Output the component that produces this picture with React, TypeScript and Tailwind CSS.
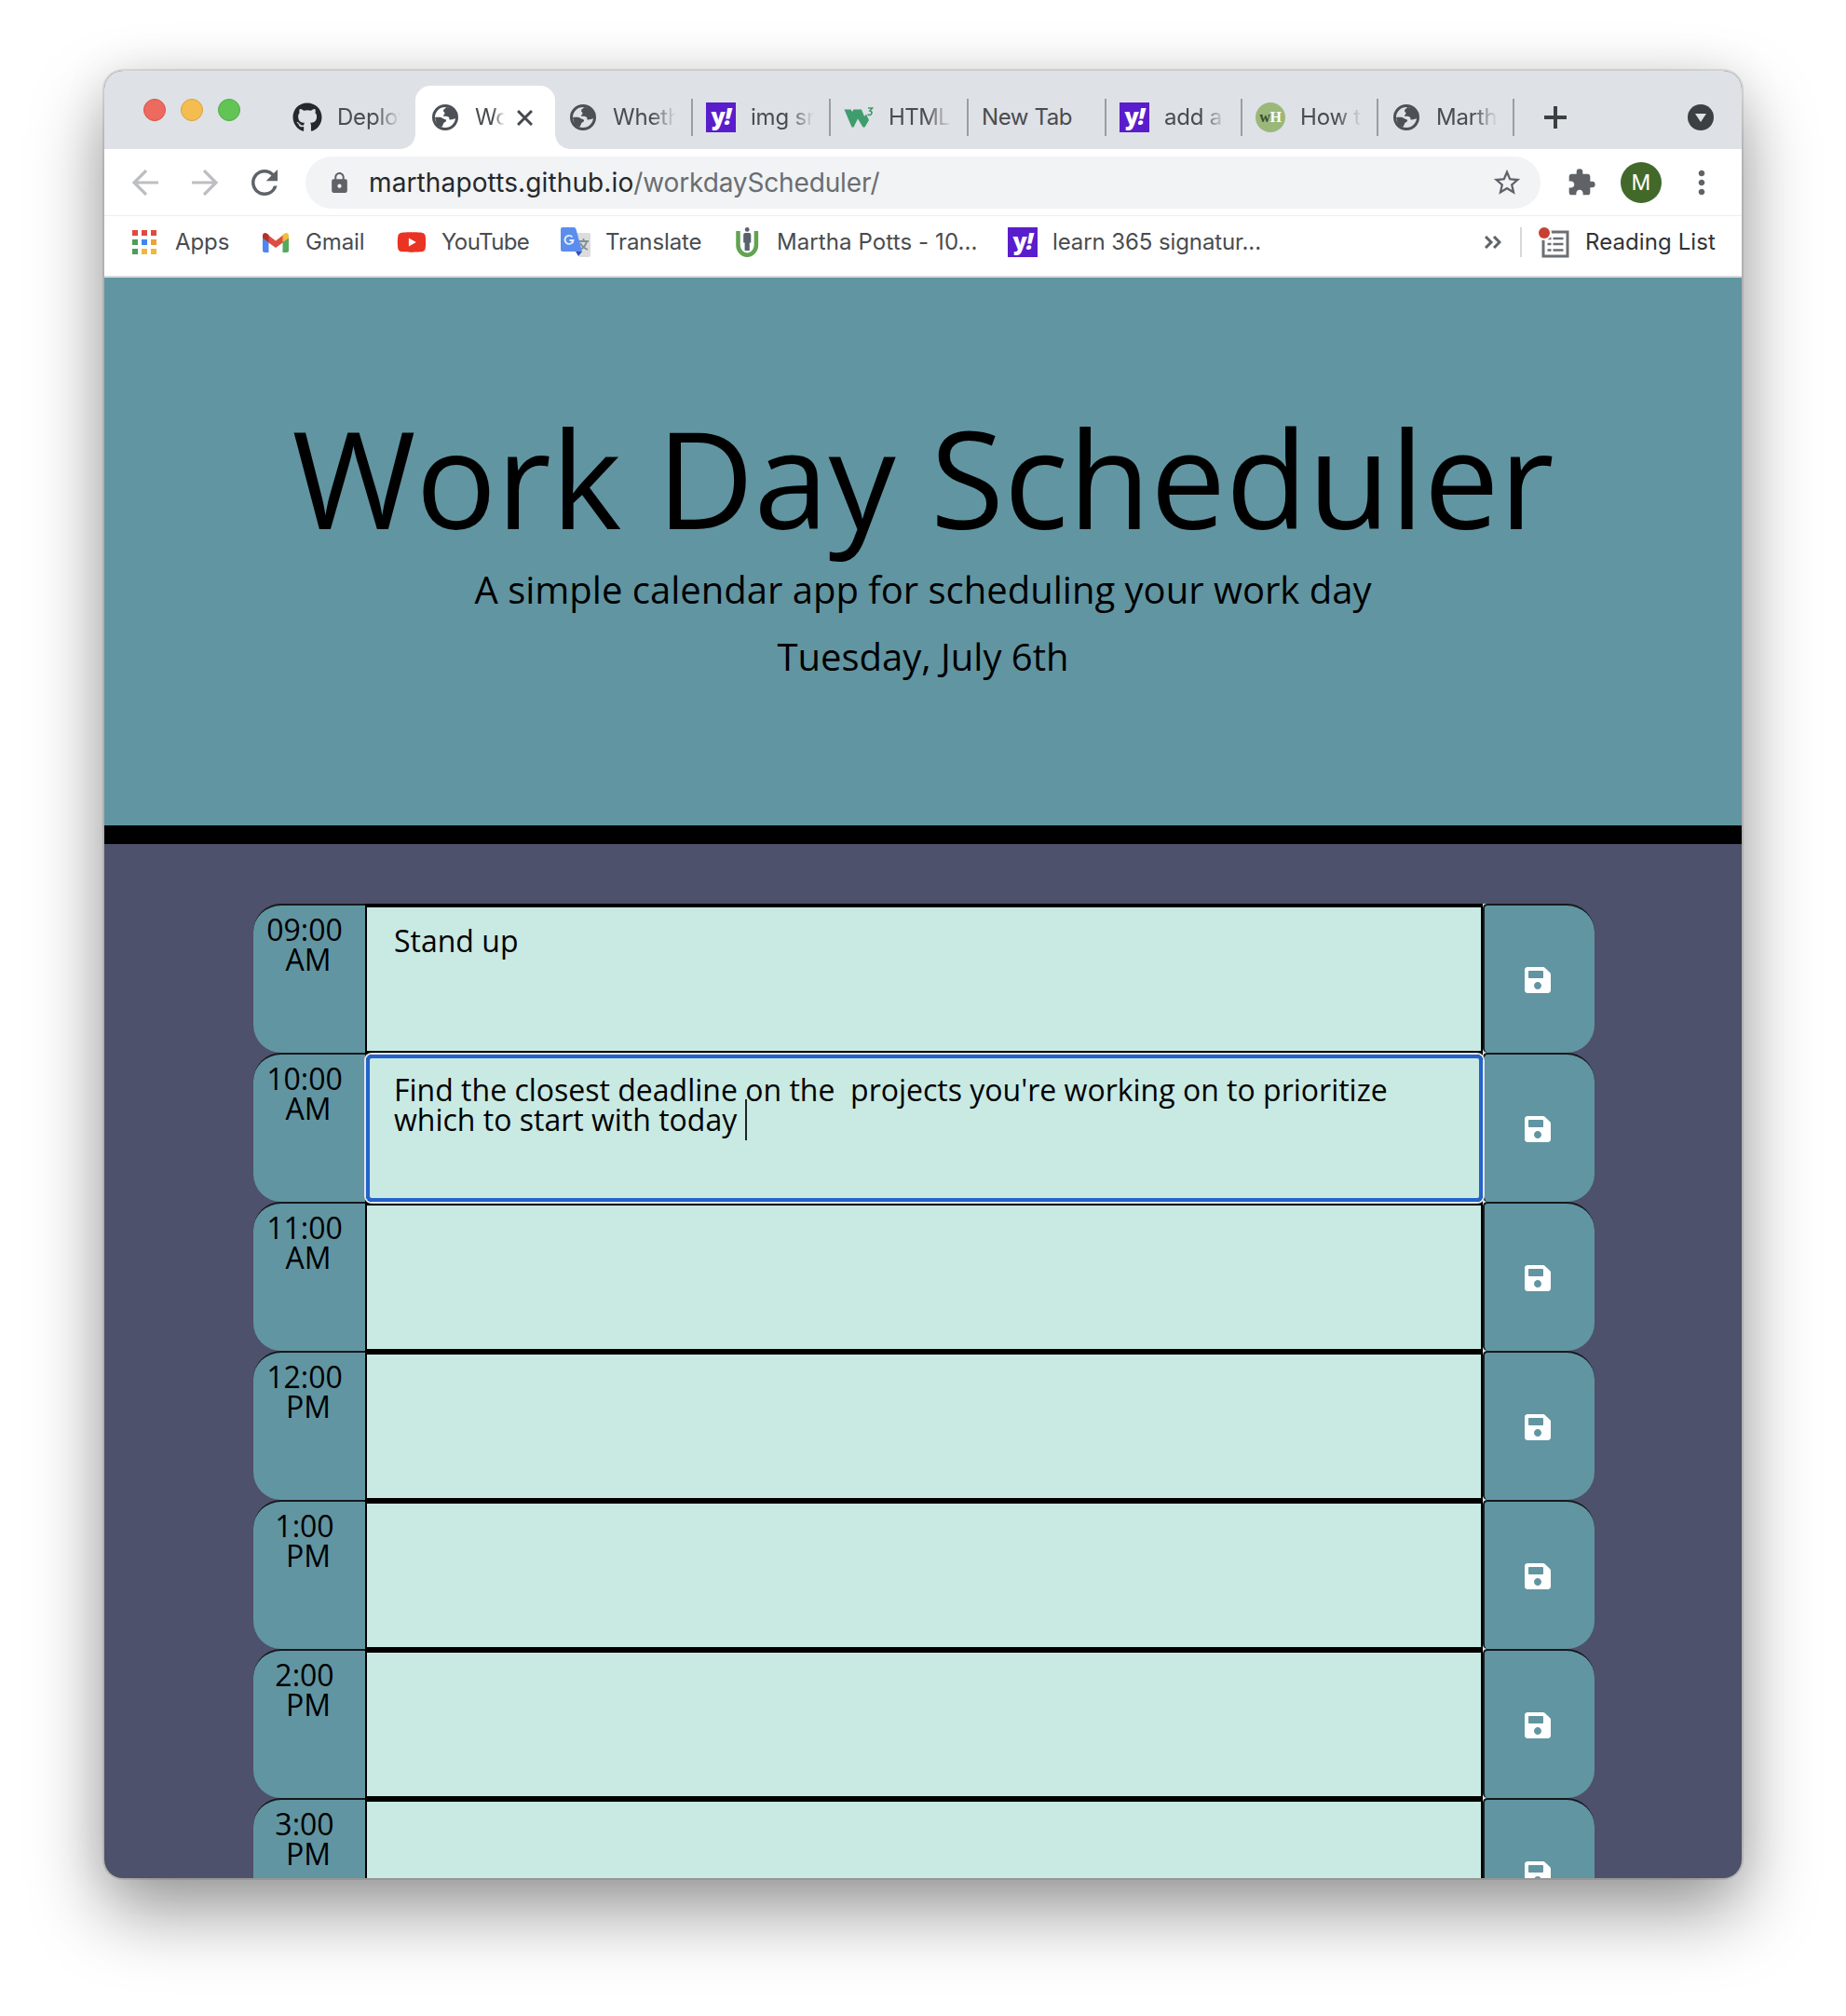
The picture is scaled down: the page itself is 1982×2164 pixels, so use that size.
import React from 'react';
import { FaGithub, FaSave, FaYoutube } from 'react-icons/fa';
import { MdLock, MdRefresh, MdStarBorder, MdExtension, MdMoreVert } from 'react-icons/md';

const Globe = () => (
  <svg viewBox="0 0 28 28" className="size-7 shrink-0">
    <circle cx="14" cy="14" r="12.5" fill="none" stroke="#4d5156" strokeWidth="3" />
    <path fill="#4d5156" d="M15 3c-1 2-3 2-3 4 0 1.500 1.500 1 1.500 2.500S12 11 12 12.500c1 .8 5 0 6 1.500s-.5 2.500 1.500 2.500c2.500 0 3.500-1 6-1.500V8l-4-4ZM3 14c3-.5 7-.5 8.500 1s3 .5 3.500 2-1.500 2-2.500 3-.5 2.500-2.500 4.500L5 22Z" />
  </svg>
);

const Yahoo = () => (
  <span className="flex size-8 shrink-0 items-center justify-center bg-[#5a1dcb] pb-1 font-['Open_Sans',sans-serif] text-[25px] leading-none font-extrabold tracking-[-1px] text-white">
    y<i>!</i>
  </span>
);

const W3 = () => (
  <svg viewBox="0 0 32 32" className="size-8 shrink-0">
    <path fill="#3f9c6d" d="M.5 7.500h7l1.500 2.500 1.500-2.500h8.500l3 7.500 2-2.500 3 6.500-4.500 7.500h-2L15 17.500 10.500 26.500H8.500Z" />
    <path d="M26 6h4.500l-2.500 3q3.500 1 1 4-1.500 1-3.500 0" fill="none" stroke="#3f9c6d" strokeWidth="1.700" />
  </svg>
);

const WikiHow = () => (
  <span className="flex size-8 shrink-0 items-center justify-center rounded-full bg-[#9ab87a] font-['Liberation_Serif',serif] text-[16px] leading-none font-bold text-white">
    <span className="text-[#3d4a34]">w</span>H
  </span>
);

const Gmail = () => (
  <svg viewBox="0 0 28 21" className="h-[21px] w-7 shrink-0">
    <path fill="#4d87ee" d="M0 5v14q0 2 2 2h4.500V9Z" />
    <path fill="#55a95c" d="M28 5v14q0 2-2 2h-4.500V9Z" />
    <path fill="#dc4e41" d="M5 1.500 14 8.500 23 1.500V9.500L14 16 5 9.500Z" />
    <path fill="#b5302a" d="M0 3C0 0 3-.8 5 1l1.500 1v8L0 5.500Z" />
    <path fill="#f4bd3b" d="M28 3c0-3-3-3.800-5-2l-1.500 1v8L28 5.500Z" />
  </svg>
);

const Translate = () => (
  <svg viewBox="0 0 32 32" className="size-8 shrink-0">
    <path fill="#dcdcdc" d="M14 6h16q2 0 2 2v22q0 2-2 2H20Z" />
    <path d="M19 15h11M24.500 12v3M28 15q-1.500 6-7 9M21 17q3 5 8 7" fill="none" stroke="#7c9096" strokeWidth="1.800" />
    <path fill="#3a4fb5" d="M16 26h7l-4 5Z" />
    <path fill="#5b8def" d="M2 0h12q2 0 2.500 2L23 26H2q-2 0-2-2V2q0-2 2-2Z" />
    <path d="M12.500 10.500A4.500 4.500 0 1 0 13.500 14H9.500" fill="none" stroke="#e6eeff" strokeWidth="1.900" />
  </svg>
);

const PersonU = () => (
  <svg viewBox="0 0 26 32" className="h-8 w-[26px] shrink-0">
    <path d="M3.500 4v15a9.700 10.700 0 0 0 19.400 0V4" fill="none" stroke="#62a350" strokeWidth="4.500" />
    <circle cx="13.200" cy="2.400" r="2.400" fill="#59616b" />
    <path fill="#59616b" d="M11 6h4.500q1.800 0 1.800 2v8.500h-1.500V25h-5.200v-8.500H9.200V8q0-2 1.800-2Z" />
  </svg>
);

const ReadingList = () => (
  <svg viewBox="0 0 34 34" className="size-[34px] shrink-0">
    <rect x="6" y="6" width="26" height="26" fill="none" stroke="#6b7075" strokeWidth="3" />
    <path d="M10.500 13h4M16.500 13h11M10.500 19h4M16.500 19h11M10.500 25.500h4M16.500 25.500h11" stroke="#6b7075" strokeWidth="2.600" />
    <circle cx="7" cy="7" r="8" fill="#fff" />
    <circle cx="7" cy="7" r="6" fill="#c84031" />
  </svg>
);

const Arrow = ({ flip = false }: { flip?: boolean }) => (
  <svg viewBox="0 0 28 28" className={flip ? 'size-7 rotate-180' : 'size-7'}>
    <path d="M28 14H2M15 1 2 14l13 13" fill="none" stroke="#bcbec1" strokeWidth="3.200" />
  </svg>
);

type TabProps = { icon?: React.ReactNode; label: string; width: string; text: string };

const Tab = ({ icon, label, width, text }: TabProps) => (
  <div className={`flex h-10 shrink-0 items-center border-r-2 border-[#9a9da1] ${width}`}>
    {icon}
    <span className={`overflow-hidden whitespace-nowrap ${text}`}>{label}</span>
  </div>
);

const fade = '[mask-image:linear-gradient(to_right,black_60%,transparent)]';

const hours = [
  ['09:00', 'AM', 'Stand up'],
  ['10:00', 'AM', "Find the closest deadline on the  projects you're working on to prioritize\nwhich to start with today "],
  ['11:00', 'AM', ''],
  ['12:00', 'PM', ''],
  ['1:00', 'PM', ''],
  ['2:00', 'PM', ''],
  ['3:00', 'PM', ''],
];

const Row = ({ time, half, note, focused }: { time: string; half: string; note: string; focused: boolean }) => (
  <div className="flex h-40 shrink-0">
    <div className="w-[120px] rounded-l-[30px] border-t-2 border-[#15191c] bg-[#6195a2] pt-[10px] text-center leading-8">
      <div className="pr-[10px]">{time}</div>
      <div className="pr-[2px]">{half}</div>
    </div>
    <div className="relative w-[1200px] border-t-4 border-r-2 border-b-2 border-l-2 border-black bg-[#c9e9e3] pt-[20px] pl-[29px] leading-8 whitespace-pre">
      {note}
      {focused && (
        <>
          <span className="inline-block h-0 w-0 align-baseline">
            <span className="absolute -mt-[34px] h-[44px] w-[2px] bg-[#1c2423]" />
          </span>
          <span className="absolute -top-[2px] -right-[2px] -bottom-[2px] -left-[1px] z-10 rounded-[6px] border-4 border-[#2363cb] shadow-[0_0_0_2px_#dfe6ee]" />
        </>
      )}
    </div>
    <div className="w-[120px] bg-linear-to-r from-[#c9e9e3] from-[6px] to-transparent to-[6px]">
      <div className="flex h-full items-center justify-center rounded-l-[5px] rounded-r-[30px] border-t-2 border-l-2 border-[#15191c] bg-[#6195a2]">
        <FaSave className="mt-[2px] mr-[4px] size-8 text-white" />
      </div>
    </div>
  </div>
);

export default function App() {
  return (
    <div className="h-[2164px] w-[1982px] overflow-hidden bg-white px-[112px] pt-[76px]">
      <div className="flex h-[1940px] w-[1758px] flex-col overflow-hidden rounded-[20px] bg-[#4e516b] font-[Inter,sans-serif] text-[#494c50] shadow-[0_0_0_2px_rgba(0,0,0,0.1),0_36px_80px_rgba(0,0,0,0.4),0_0_50px_rgba(0,0,0,0.08)]">
        <div className="flex h-[84px] shrink-0 bg-[#dee1e6] text-[24px] tracking-[-0.2px]">
          <div className="flex w-[202px] gap-4 pt-[30px] pl-[42px]">
            <span className="size-6 rounded-full border border-[#d8524a] bg-[#ec6a5e]" />
            <span className="size-6 rounded-full border border-[#dba13a] bg-[#f4bd4f]" />
            <span className="size-6 rounded-full border border-[#4fae40] bg-[#61c454]" />
          </div>
          <div className="flex w-[132px] items-center pt-[16px]">
            <FaGithub className="size-8 shrink-0 text-[#24292e]" />
            <span className={`ml-4 w-[68px] overflow-hidden ${fade}`}>Deploy</span>
          </div>
          <div className="relative mt-4 flex w-[150px] items-center rounded-t-[16px] bg-white pl-[18px]">
            <span className="absolute bottom-0 -left-4 size-4 bg-[radial-gradient(circle_at_0_0,#dee1e6_15.5px,white_16px)]" />
            <span className="absolute -right-4 bottom-0 size-4 bg-[radial-gradient(circle_at_100%_0,#dee1e6_15.5px,white_16px)]" />
            <Globe />
            <span className={`ml-[18px] w-[32px] overflow-hidden ${fade}`}>Wo</span>
            <svg viewBox="0 0 16 16" className="ml-[13px] size-[17px]"><path d="m1 1 14 14M15 1 1 15" stroke="#45494d" strokeWidth="2.800" /></svg>
          </div>
          <div className="flex items-center pt-4 pl-4">
            <Tab icon={<Globe />} label="Whether" width="w-[132px]" text={`ml-[18px] w-[68px] ${fade}`} />
            <Tab icon={<Yahoo />} label="img src" width="w-[148px] pl-[14px]" text={`ml-4 w-[68px] ${fade}`} />
            <Tab icon={<W3 />} label="HTML C" width="w-[148px] pl-[14px]" text={`ml-[16px] w-[67px] tracking-[-0.6px] ${fade}`} />
            <Tab label="New Tab" width="w-[148px] pl-[14px]" text="w-[110px] tracking-[-0.4px]" />
            <Tab icon={<Yahoo />} label="add a" width="w-[146px] pl-[14px]" text={`ml-4 w-[66px] ${fade}`} />
            <Tab icon={<WikiHow />} label="How to" width="w-[146px] pl-[14px]" text={`ml-4 w-[66px] ${fade}`} />
            <Tab icon={<Globe />} label="Martha" width="w-[146px] pl-[16px]" text={`ml-[18px] w-[66px] ${fade}`} />
            <svg viewBox="0 0 24 24" className="ml-8 size-6"><path d="M12 0v24M0 12h24" stroke="#3c4043" strokeWidth="4" /></svg>
            <svg viewBox="0 0 28 28" className="ml-[130px] size-7"><circle cx="14" cy="14" r="14" fill="#3c4043" /><path d="M8 10h12l-6 9Z" fill="#dee1e6" /></svg>
          </div>
        </div>

        <div className="flex h-[72px] shrink-0 items-center border-b border-[#eceef0] bg-white pt-px pl-[30px]">
          <Arrow />
          <div className="ml-9 flex"><Arrow flip /></div>
          <MdRefresh className="ml-[29px] size-[42px] text-[#5f6368]" />
          <div className="ml-[23px] flex h-14 w-[1326px] items-center rounded-full bg-[#f1f3f4] pl-[24px]">
            <MdLock className="size-[25px] text-[#5f6368]" />
            <span className="ml-[19px] text-[28px] tracking-[0.12px] text-[#26282b]">marthapotts.github.io<span className="tracking-[-0.14px] text-[#6a6d71]">/workdayScheduler/</span></span>
            <MdStarBorder className="mr-[19px] ml-auto size-[34px] text-[#5f6368]" />
          </div>
          <MdExtension className="ml-[28px] size-8 text-[#5f6368]" />
          <span className="ml-[26px] flex size-11 items-center justify-center rounded-full bg-[#42692a] text-[23px] text-white">M</span>
          <MdMoreVert className="ml-[23px] size-[40px] text-[#5f6368]" />
        </div>

        <div className="flex h-[66px] shrink-0 items-center border-b-2 border-[#d9dbdd] bg-white pb-[8px] pl-[30px] text-[24px] tracking-[-0.1px]">
          <div className="grid grid-cols-3 gap-1">
            {['bg-[#e04a3f]', 'bg-[#e04a3f]', 'bg-[#e04a3f]', 'bg-[#4d9c5b]', 'bg-[#4285f4]', 'bg-[#e8a33a]', 'bg-[#4d9c5b]', 'bg-[#efb73e]', 'bg-[#efb73e]'].map((c, i) => (
              <span key={i} className={`size-[6px] ${c}`} />
            ))}
          </div>
          <span className="w-[114px] pl-5">Apps</span>
          <Gmail />
          <span className="w-[116px] pl-[18px]">Gmail</span>
          <FaYoutube className="size-8 text-[#e93323]" />
          <span className="w-[144px] pl-4 tracking-[-0.6px]">YouTube</span>
          <Translate />
          <span className="w-[155px] pl-4">Translate</span>
          <PersonU />
          <span className="w-[267px] pl-[19px] tracking-[0.1px]">Martha Potts - 10...</span>
          <Yahoo />
          <span className="pl-4">learn 365 signatur...</span>
          <svg viewBox="0 0 18 14" className="mr-[20px] ml-auto h-[14px] w-[18px]"><path d="m1 1 6 6-6 6M10 1l6 6-6 6" fill="none" stroke="#5f6368" strokeWidth="3" /></svg>
          <span className="h-8 w-[2px] bg-[#d5d7da]" />
          <span className="ml-[17px]"><ReadingList /></span>
          <span className="mr-[28px] ml-[17px] tracking-[0.1px] text-[#303336]">Reading List</span>
        </div>

        <header className="flex h-[608px] shrink-0 flex-col items-center border-b-[20px] border-black bg-[#6195a2] pt-[128px] font-['Open_Sans',sans-serif] text-black">
          <h1 className="text-[144px] leading-[172px] whitespace-nowrap">Work Day Scheduler</h1>
          <p className="mt-[11px] text-[40px] leading-[48px] whitespace-nowrap">A simple calendar app for scheduling your work day</p>
          <p className="mt-[24px] text-[40px] leading-[48px] whitespace-nowrap">Tuesday, July 6th</p>
        </header>

        <main className="flex flex-col pt-[64px] pl-[160px] font-['Open_Sans',sans-serif] text-[32px] text-black">
          {hours.map(([time, half, note], i) => (
            <Row key={time} time={time} half={half} note={note} focused={i === 1} />
          ))}
        </main>
      </div>
    </div>
  );
}
